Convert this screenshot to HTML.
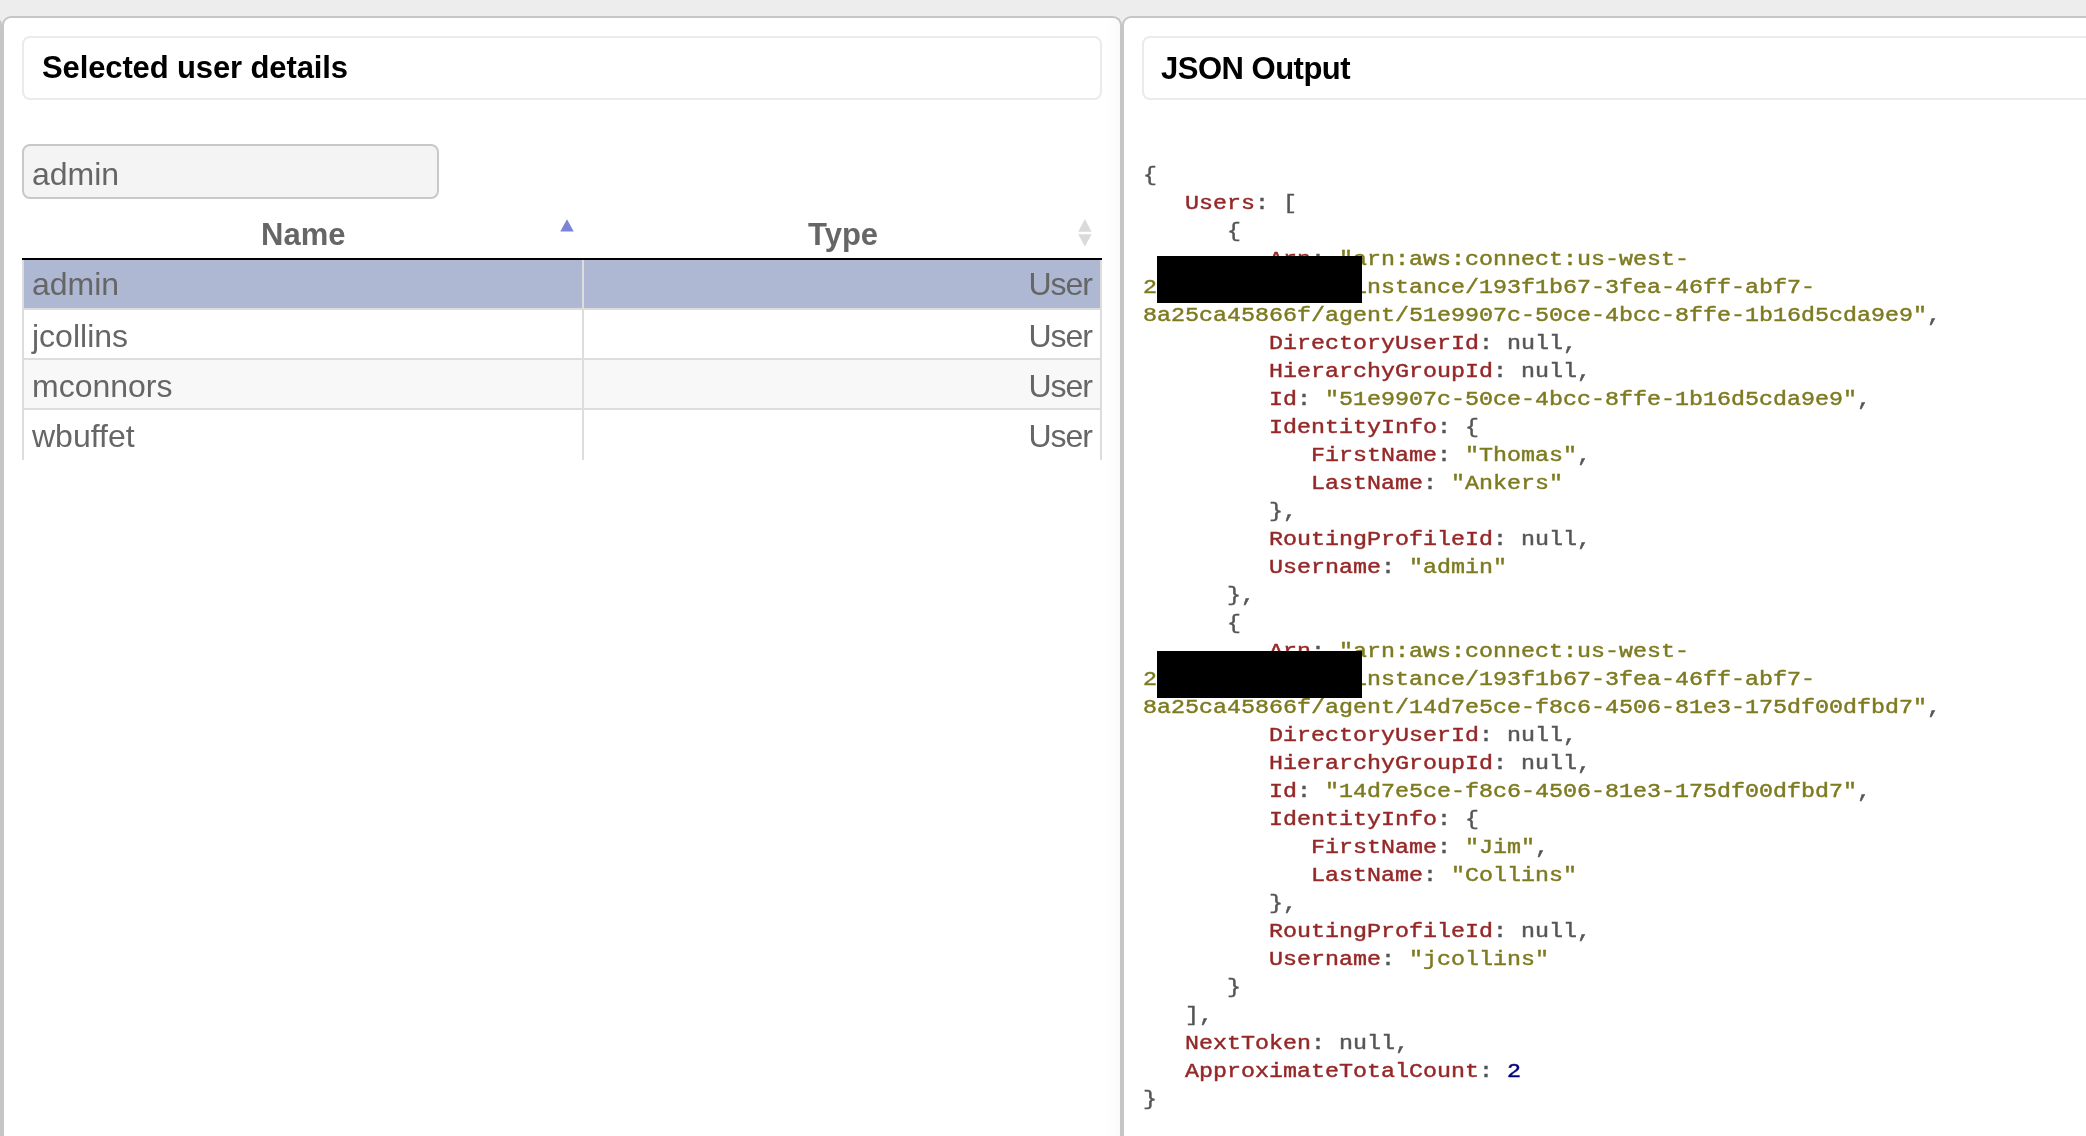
<!DOCTYPE html>
<html><head><meta charset="utf-8">
<style>
html,body{margin:0;padding:0;}
body{width:2086px;height:1136px;overflow:hidden;background:#ededed;position:relative;font-family:"Liberation Sans",sans-serif;}
.panel{position:absolute;top:16px;height:1200px;background:#fff;border:2px solid #c6c6c6;border-radius:9px 9px 0 0;box-sizing:border-box;}
#p0{left:-1000px;width:1002px;}
#p1{left:2px;width:1120px;}
#p2{left:1122px;width:2000px;}
.hbox{position:absolute;top:36px;height:64px;border:2px solid #ebebeb;border-radius:8px;box-sizing:border-box;background:#fff;}
.htxt{position:absolute;font-weight:bold;font-size:31px;line-height:36px;color:#000;white-space:nowrap;}
.abs{position:absolute;}
#search{left:22px;top:144px;width:417px;height:55px;border:2px solid #c8c8c8;border-radius:8px;background:#f4f4f4;box-sizing:border-box;}
.cell{position:absolute;font-size:32px;line-height:40px;color:#666;white-space:nowrap;}
.th{position:absolute;font-size:31px;line-height:36px;font-weight:bold;color:#666;white-space:nowrap;}
pre{position:absolute;margin:0;font-family:"Liberation Mono",monospace;font-size:23.33px;line-height:32.558px;color:#555;-webkit-text-stroke:0.5px;transform:scaleY(0.86);transform-origin:0 0;}
.k{color:#942727}.s{color:#7d7a1f}.n{color:#000080}
</style></head><body>
<div id="wrap" style="position:absolute;left:0;top:0;width:2086px;height:1136px;will-change:transform;">
<div class="panel" id="p0"></div>
<div class="panel" id="p1"></div>
<div class="panel" id="p2"></div>
<div class="abs" style="left:1106px;top:18px;width:14px;height:1118px;background:linear-gradient(to right,rgba(0,0,0,0),rgba(0,0,0,0.02));"></div>

<div class="hbox" style="left:22px;width:1080px;"></div>
<div class="htxt" id="t1" style="left:42px;top:50px;letter-spacing:-0.12px;">Selected user details</div>

<div class="abs" id="search"></div>
<div class="cell" id="stxt" style="left:32px;top:154px;">admin</div>

<div class="th" id="thname" style="left:261px;top:217px;">Name</div>
<div class="th" id="thtype" style="left:808px;top:217px;">Type</div>
<svg class="abs" style="left:550px;top:210px" width="40" height="30"><polygon points="10.3,21.6 17,9.2 23.7,21.6" fill="#7b82d7"/></svg>
<svg class="abs" style="left:1068px;top:212px" width="36" height="40"><polygon points="10.2,19.7 16.9,7 23.6,19.7" fill="#dadada"/><polygon points="10.2,22.2 16.9,34.5 23.6,22.2" fill="#dadada"/></svg>

<div class="abs" style="left:22px;top:258px;width:1080px;height:2px;background:#000;"></div>
<div class="abs" style="left:22px;top:260px;width:2px;height:200px;background:#dddddd;"></div>
<div class="abs" style="left:1100px;top:260px;width:2px;height:200px;background:#dddddd;"></div>
<div class="abs" style="left:24px;top:260px;width:1076px;height:48px;background:#aeb8d3;"></div>
<div class="abs" style="left:24px;top:308px;width:1076px;height:2px;background:#dddddd;"></div>
<div class="cell" style="left:32px;top:264px;">admin</div>
<div class="cell r" style="right:994px;top:264px;letter-spacing:-1px;">User</div>
<div class="abs" style="left:24px;top:310px;width:1076px;height:48px;background:#ffffff;"></div>
<div class="abs" style="left:24px;top:358px;width:1076px;height:2px;background:#dddddd;"></div>
<div class="cell" style="left:32px;top:316px;">jcollins</div>
<div class="cell r" style="right:994px;top:316px;letter-spacing:-1px;">User</div>
<div class="abs" style="left:24px;top:360px;width:1076px;height:48px;background:#f8f8f8;"></div>
<div class="abs" style="left:24px;top:408px;width:1076px;height:2px;background:#dddddd;"></div>
<div class="cell" style="left:32px;top:366px;">mconnors</div>
<div class="cell r" style="right:994px;top:366px;letter-spacing:-1px;">User</div>
<div class="abs" style="left:24px;top:410px;width:1076px;height:48px;background:#ffffff;"></div>
<div class="cell" style="left:32px;top:416px;">wbuffet</div>
<div class="cell r" style="right:994px;top:416px;letter-spacing:-1px;">User</div>

<div class="abs" style="left:582px;top:260px;width:2px;height:200px;background:#dddddd;"></div>

<div class="hbox" style="left:1142px;width:1500px;"></div>
<div class="htxt" id="t2" style="left:1161px;top:51px;letter-spacing:-0.5px;">JSON Output</div>

<pre id="json" style="left:1143px;top:162px;">{
   <span class="k">Users</span>: [
      {
         <span class="k">Arn</span>: <span class="s">"arn:aws:connect:us-west-</span>
<span class="s">2XXXXXXXXXXXXX:instance/193f1b67-3fea-46ff-abf7-</span>
<span class="s">8a25ca45866f/agent/51e9907c-50ce-4bcc-8ffe-1b16d5cda9e9"</span>,
         <span class="k">DirectoryUserId</span>: null,
         <span class="k">HierarchyGroupId</span>: null,
         <span class="k">Id</span>: <span class="s">"51e9907c-50ce-4bcc-8ffe-1b16d5cda9e9"</span>,
         <span class="k">IdentityInfo</span>: {
            <span class="k">FirstName</span>: <span class="s">"Thomas"</span>,
            <span class="k">LastName</span>: <span class="s">"Ankers"</span>
         },
         <span class="k">RoutingProfileId</span>: null,
         <span class="k">Username</span>: <span class="s">"admin"</span>
      },
      {
         <span class="k">Arn</span>: <span class="s">"arn:aws:connect:us-west-</span>
<span class="s">2XXXXXXXXXXXXX:instance/193f1b67-3fea-46ff-abf7-</span>
<span class="s">8a25ca45866f/agent/14d7e5ce-f8c6-4506-81e3-175df00dfbd7"</span>,
         <span class="k">DirectoryUserId</span>: null,
         <span class="k">HierarchyGroupId</span>: null,
         <span class="k">Id</span>: <span class="s">"14d7e5ce-f8c6-4506-81e3-175df00dfbd7"</span>,
         <span class="k">IdentityInfo</span>: {
            <span class="k">FirstName</span>: <span class="s">"Jim"</span>,
            <span class="k">LastName</span>: <span class="s">"Collins"</span>
         },
         <span class="k">RoutingProfileId</span>: null,
         <span class="k">Username</span>: <span class="s">"jcollins"</span>
      }
   ],
   <span class="k">NextToken</span>: null,
   <span class="k">ApproximateTotalCount</span>: <span class="n">2</span>
}</pre>
<div class="abs" style="left:1157px;top:256px;width:205px;height:47px;background:#000;"></div>
<div class="abs" style="left:1157px;top:651px;width:205px;height:47px;background:#000;"></div>
</div>
</body></html>
